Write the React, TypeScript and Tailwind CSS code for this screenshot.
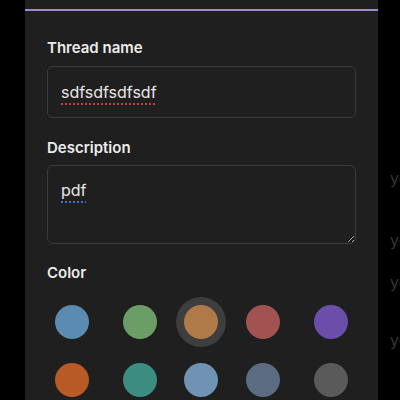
import React, { useState } from 'react';

const COLORS = [
  '#5b8bb0',
  '#6a9e66',
  '#b07a48',
  '#a35252',
  '#6b4eaa',
  '#b85a26',
  '#3d8c80',
  '#7093b3',
  '#5b6b82',
  '#5a5a5a',
];

export default function App() {
  const [name, setName] = useState('sdfsdfsdfsdf');
  const [description, setDescription] = useState('pdf');
  const [selected, setSelected] = useState(2);

  return (
    <div className="w-[400px] h-[400px] bg-black overflow-hidden flex font-['Inter',sans-serif]">
      <div className="w-[25px] shrink-0" />

      {/* Edit thread sheet */}
      <div className="w-[353px] shrink-0 bg-[#1f1f1f] flex flex-col">
        <div className="h-[9px] shrink-0" />
        <div className="h-[2px] shrink-0 bg-[#9e8ad0]" />

        <div className="px-[22px] pt-[28px] flex flex-col shrink-0">
          <label className="text-[15px] leading-[18px] font-semibold text-[#ececec]">Thread name</label>
          <div className="relative mt-[9px]">
            <input
              value={name}
              onChange={(e) => setName(e.target.value)}
              spellCheck={false}
              className="h-[52px] w-full rounded-[6px] border border-[#3b3b3b] bg-[#1f1f1f] px-[13px] text-[16px] text-[#e8e8e8] outline-none"
            />
            {/* spellcheck squiggle */}
            <span className="pointer-events-none absolute left-[14px] top-[16px] text-[16px] leading-[20px] text-transparent underline decoration-dotted decoration-[#c2413a] decoration-2 underline-offset-[5px]">
              {name}
            </span>
          </div>

          <label className="mt-[21px] text-[15px] leading-[18px] font-semibold text-[#ececec]">Description</label>
          <textarea
            value={description}
            onChange={(e) => setDescription(e.target.value)}
            spellCheck={false}
            className="mt-[8px] h-[79px] w-full rounded-[6px] border border-[#3b3b3b] bg-[#1f1f1f] px-[13px] pt-[14px] text-[16px] leading-[20px] text-[#e8e8e8] outline-none [color-scheme:dark] underline decoration-dotted decoration-[#3f6fd0] decoration-2 underline-offset-[5px]"
          />

          <label className="mt-[20px] text-[15px] leading-[18px] font-semibold text-[#ececec]">Color</label>
          <div className="mt-[15px] grid grid-cols-5 gap-y-[8px]">
            {COLORS.map((c, i) => (
              <button
                key={c}
                onClick={() => setSelected(i)}
                className={`w-[50px] h-[50px] rounded-full flex items-center justify-center ${
                  selected === i ? 'bg-[#3e3e3e]' : 'bg-transparent'
                } ${i % 5 === 0 ? 'justify-self-start' : i % 5 === 4 ? 'justify-self-end' : 'justify-self-center'}`}
              >
                <span className="w-[34px] h-[34px] rounded-full" style={{ backgroundColor: c }} />
              </button>
            ))}
          </div>
        </div>
      </div>

      {/* Messages behind the sheet */}
      <div className="ml-[12px] flex-1 overflow-hidden flex flex-col text-[16px] leading-[20px] text-[#353535] whitespace-nowrap">
        <div className="mt-[168px]">you</div>
        <div className="mt-[42px]">you</div>
        <div className="mt-[22px]">you</div>
        <div className="mt-[38px]">you</div>
      </div>
    </div>
  );
}
